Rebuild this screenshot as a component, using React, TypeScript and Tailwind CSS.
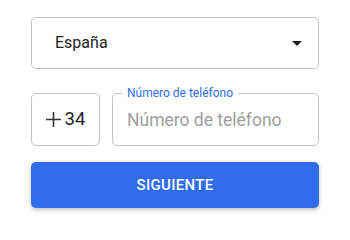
export default function App() {
  return (
    <div className="h-[227px] w-[350px] bg-white font-['Roboto',sans-serif]">
      <div className="flex flex-col px-[31px] pt-[17px]">
        <button className="flex h-[52px] w-[288px] items-center justify-between rounded-[5px] border border-[#c4c4c4] pl-[23px] pr-[16px] text-left">
          <span className="text-[16px] text-[#222]">España</span>
          <svg width="10" height="5" viewBox="0 0 10 5" className="fill-[#222]">
            <path d="M0 0h10L5 5z" />
          </svg>
        </button>

        <div className="mt-[24px] flex gap-[12px]">
          <div className="flex h-[53px] w-[69px] items-center justify-center gap-[4px] rounded-[5px] border border-[#c4c4c4] text-[#222]">
            <svg width="15" height="15" viewBox="0 0 15 15" className="stroke-[#333]">
              <path d="M7.5 0v15M0 7.5h15" strokeWidth="1.6" />
            </svg>
            <span className="text-[18.5px]">34</span>
          </div>
          <div className="relative h-[53px] flex-1">
            <fieldset className="absolute inset-0 -top-[6px] rounded-[5px] border border-[#c4c4c4] px-[9px]">
              <legend className="px-[5px] text-[12px] leading-[12px] text-[#2f6ded]">Número de teléfono</legend>
            </fieldset>
            <input
              placeholder="Número de teléfono"
              className="relative h-full w-full bg-transparent pl-[15px] text-[17.5px] text-[#222] outline-none placeholder:text-[#9e9e9e]"
            />
          </div>
        </div>

        <button className="mt-[16px] h-[46px] w-[288px] rounded-[5px] bg-[#2f6ded] text-[15px] font-medium tracking-[0.3px] text-white shadow-[0_2px_4px_rgba(0,0,0,0.25)]">
          SIGUIENTE
        </button>
      </div>
    </div>
  );
}
